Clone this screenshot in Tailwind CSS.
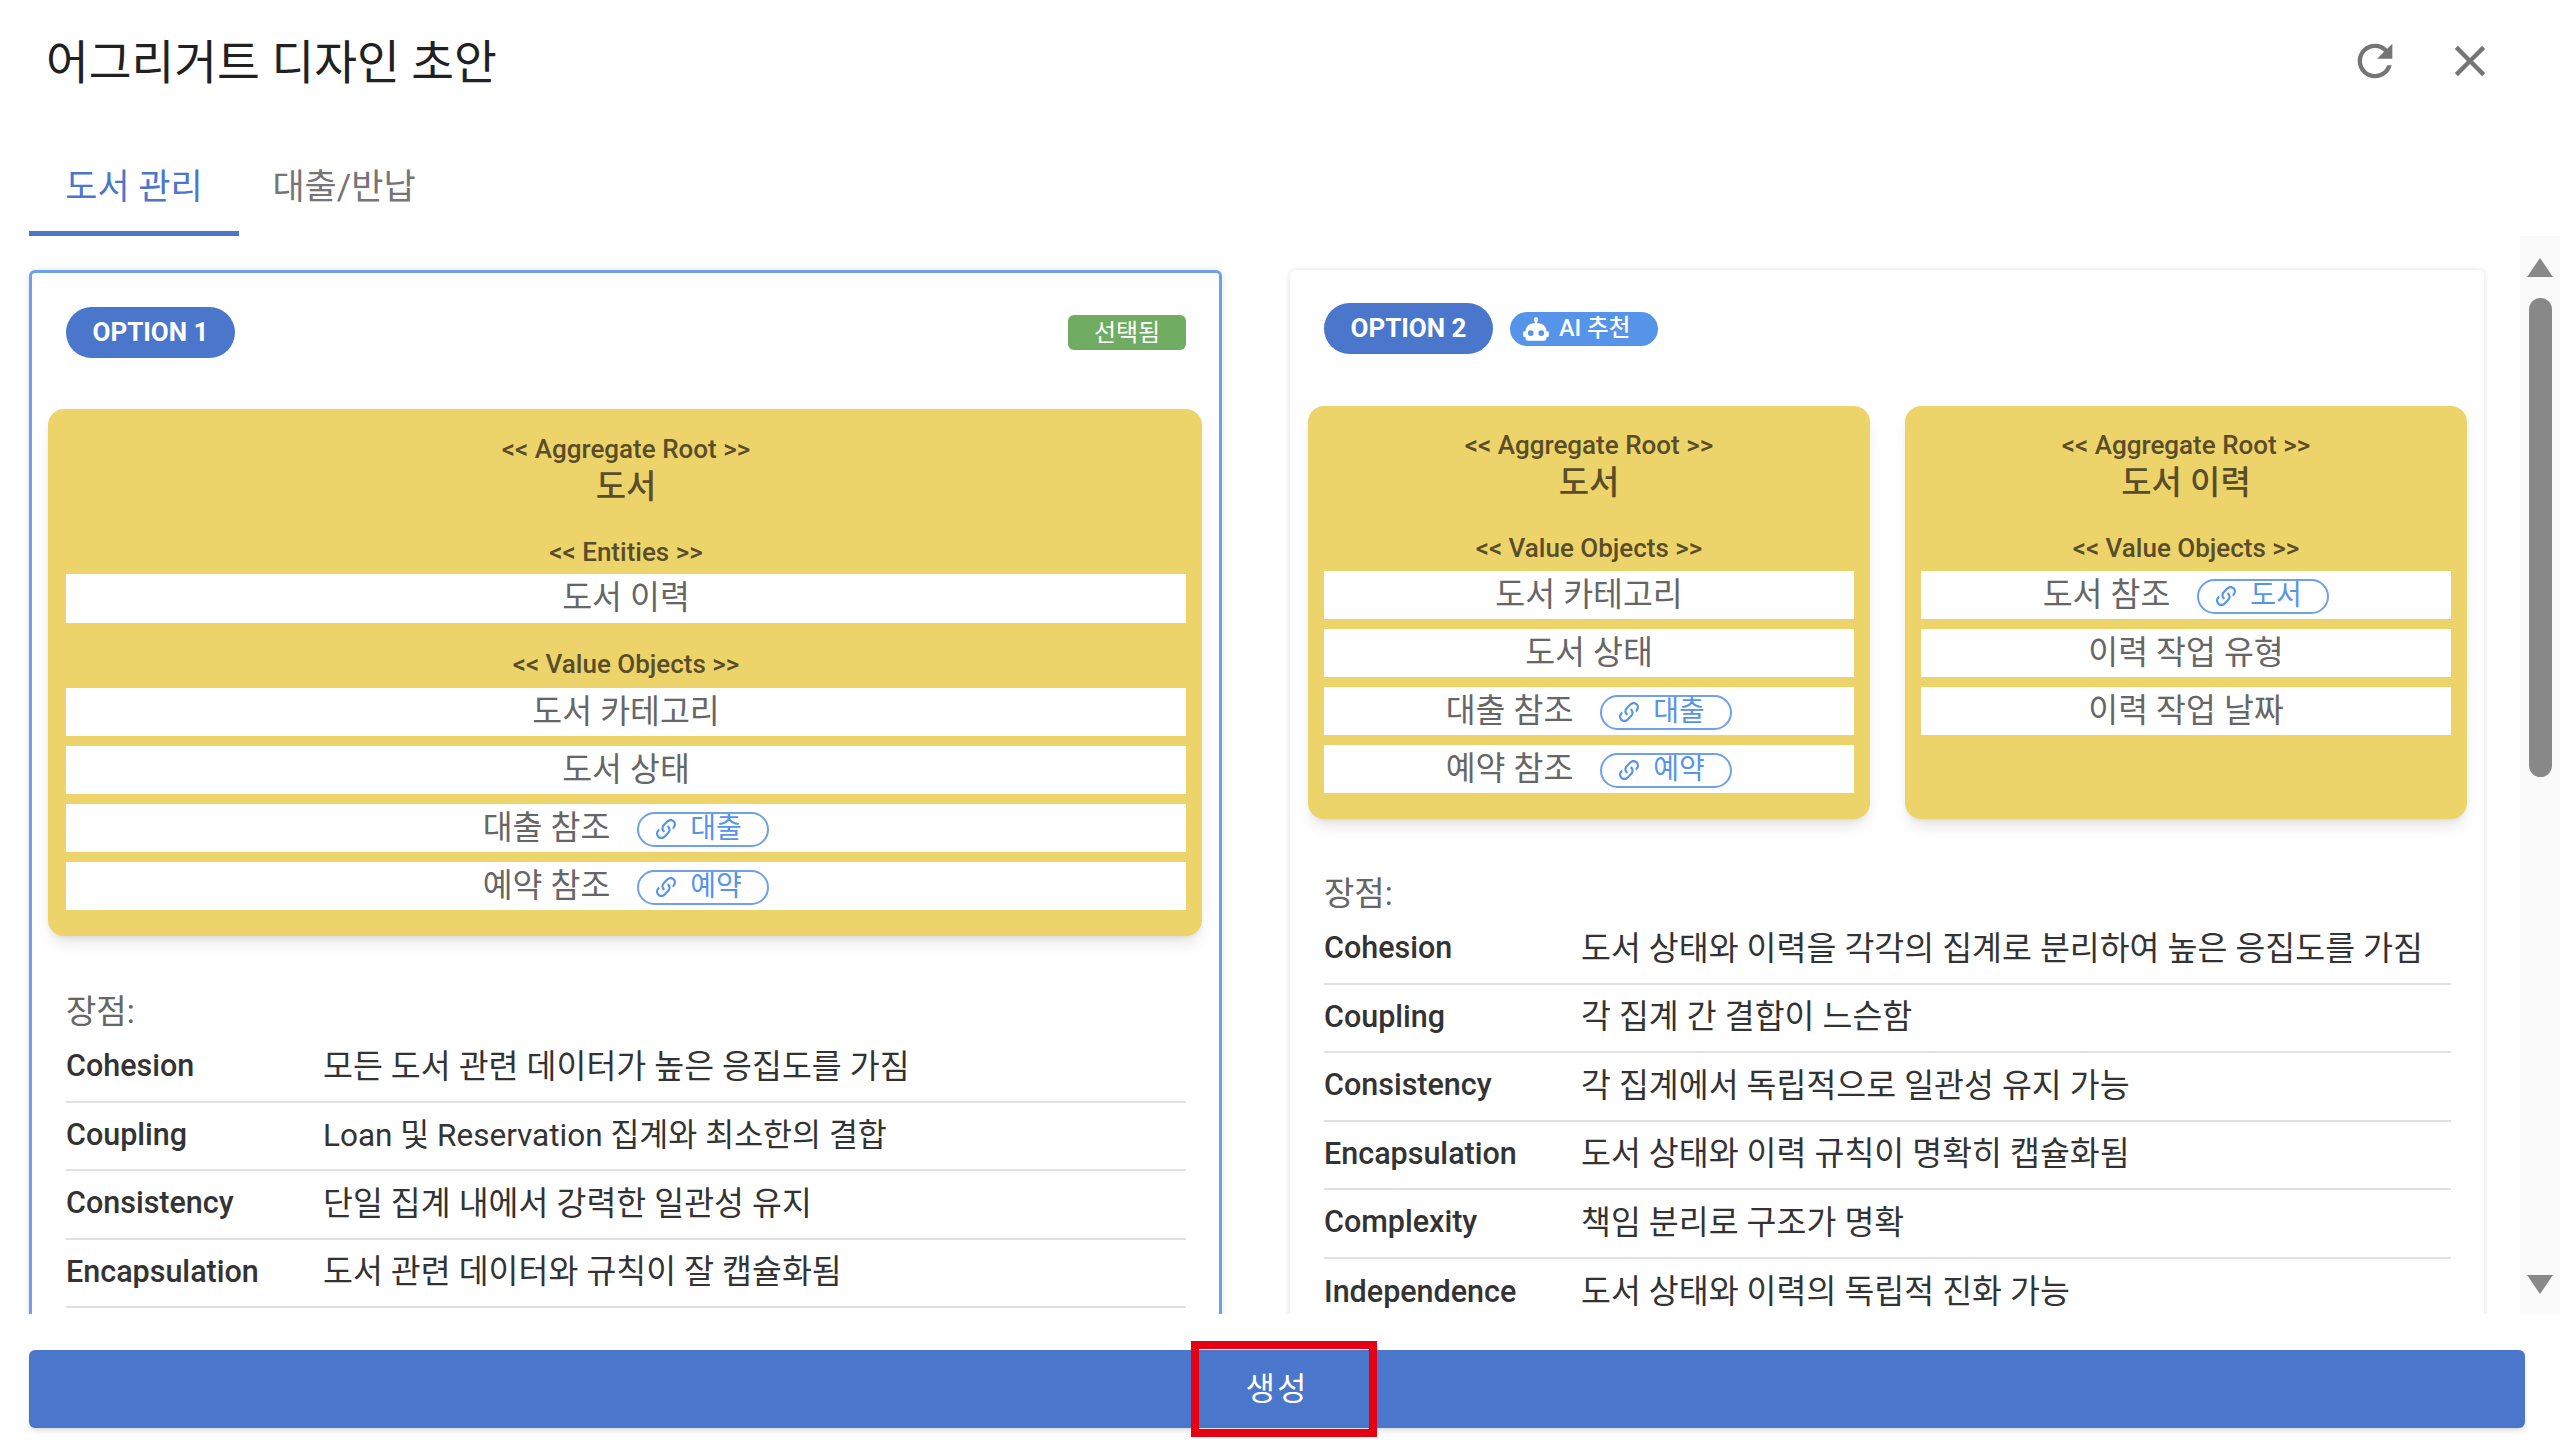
<!DOCTYPE html>
<html lang="ko">
<head>
  <meta charset="UTF-8">
  <meta name="viewport" content="width=device-width, initial-scale=1.0">
  <title>어그리거트 디자인 초안</title>
  <script src="https://cdn.jsdelivr.net/npm/@tailwindcss/browser@4"></script>
</head>
<body class="bg-white font-['Roboto','Noto_Sans_CJK_KR',sans-serif]">
  <main class="relative h-[1452px] w-[2560px] overflow-hidden flex flex-col">

    <!-- title -->
    <header class="h-[122px] shrink-0 pl-[46px] pr-[64px] flex items-start justify-between">
      <h1 class="mt-[33px] text-[46.5px] leading-[60px] text-[#212121]">어그리거트 디자인 초안</h1>
      <div class="mt-[35px] flex gap-[43px] text-[#757575]">
        <svg class="w-[52px] h-[52px]" viewBox="0 0 24 24" fill="currentColor"><path d="M17.65,6.35C16.2,4.9 14.21,4 12,4A8,8 0 0,0 4,12A8,8 0 0,0 12,20C15.73,20 18.84,17.45 19.73,14H17.65C16.83,16.33 14.61,18 12,18A6,6 0 0,1 6,12A6,6 0 0,1 12,6C13.66,6 15.14,6.69 16.22,7.78L13,11H20V4L17.65,6.35Z"/></svg>
        <svg class="w-[52px] h-[52px]" viewBox="0 0 24 24" fill="currentColor"><path d="M19,6.41L17.59,5L12,10.59L6.41,5L5,6.41L10.59,12L5,17.59L6.41,19L12,13.41L17.59,19L19,17.59L13.41,12L19,6.41Z"/></svg>
      </div>
    </header>

    <!-- tabs -->
    <nav class="h-[114px] shrink-0 pl-[29px] flex text-[35px]">
      <div class="w-[210px] h-full pt-[23px] border-b-[5px] border-[#4a76cb] text-[#4a76cb] flex items-center justify-center">도서 관리</div>
      <div class="w-[210px] h-full pt-[23px] pb-[5px] text-[#757575] flex items-center justify-center">대출/반납</div>
    </nav>

    <div class="h-[1078px] shrink-0 flex">
      <div class="w-[2520px] h-full overflow-hidden pl-[29px] pt-[34px] flex gap-[68px] items-start">

        <!-- option 1 -->
        <section class="w-[1193px] shrink-0 rounded-[6px] border-[3px] border-[#6ea0ec] bg-white pl-[16px] pr-[17px] pt-[34px] shadow-[0_0_6px_rgba(0,0,0,0.12)]">
          <div class="h-[51px] pl-[18px] pr-[16px] flex items-center justify-between">
            <span class="w-[169px] h-[51px] rounded-full bg-[#4a76cb] text-white font-bold text-[26px] flex items-center justify-center">OPTION 1</span>
            <span class="w-[118px] h-[35px] rounded-[6px] bg-[#70ad62] text-white text-[24px] flex items-center justify-center">선택됨</span>
          </div>
          <div class="mt-[51px] rounded-[16px] bg-[#ecd46b] pl-[18px] pr-[16px] pt-[25px] pb-[26px] shadow-lg">
            <div class="text-center font-medium text-[26px] leading-[30px] text-[#5a4d2a]">&lt;&lt; Aggregate Root &gt;&gt;</div>
            <div class="mt-[3px] text-center font-medium text-[33px] leading-[40px] text-[#5a4d2a]">도서</div>
            <div class="mt-[30px] text-center font-medium text-[26px] leading-[30px] text-[#5a4d2a]">&lt;&lt; Entities &gt;&gt;</div>
            <div class="mt-[7px] h-[49px] bg-white text-[32.5px] text-[#666666] flex items-center justify-center">도서 이력</div>
            <div class="mt-[26px] text-center font-medium text-[26px] leading-[30px] text-[#5a4d2a]">&lt;&lt; Value Objects &gt;&gt;</div>
            <div class="mt-[9px] flex flex-col gap-[10px] text-[32.5px] text-[#666666]">
              <div class="h-[48px] bg-white flex items-center justify-center">도서 카테고리</div>
              <div class="h-[48px] bg-white flex items-center justify-center">도서 상태</div>
              <div class="h-[48px] bg-white flex items-center justify-center gap-[27px]">대출 참조
                <span class="w-[132px] h-[35px] mt-[2px] rounded-full border-2 border-[#6ea0ec] text-[#5594e8] text-[28px] pl-[14px] flex items-center gap-[11px]">
                  <svg class="w-[26px] h-[26px]" viewBox="0 0 24 24" fill="currentColor"><path d="M10.59,13.41C11,13.8 11,14.44 10.59,14.83C10.2,15.22 9.56,15.22 9.17,14.83C7.22,12.88 7.22,9.71 9.17,7.76V7.76L12.71,4.22C14.66,2.27 17.83,2.27 19.78,4.22C21.73,6.17 21.73,9.34 19.78,11.29L18.29,12.78C18.3,11.96 18.17,11.14 17.89,10.36L18.36,9.88C19.54,8.71 19.54,6.81 18.36,5.64C17.19,4.46 15.29,4.46 14.12,5.64L10.59,9.17C9.41,10.34 9.41,12.24 10.59,13.41M13.41,9.17C13.8,8.78 14.44,8.78 14.83,9.17C16.78,11.12 16.78,14.29 14.83,16.24V16.24L11.29,19.78C9.34,21.73 6.17,21.73 4.22,19.78C2.27,17.83 2.27,14.66 4.22,12.71L5.71,11.22C5.7,12.04 5.83,12.86 6.11,13.65L5.64,14.12C4.46,15.29 4.46,17.19 5.64,18.36C6.81,19.54 8.71,19.54 9.88,18.36L13.41,14.83C14.59,13.66 14.59,11.76 13.41,10.59C13,10.2 13,9.56 13.41,9.17Z"/></svg>대출</span>
              </div>
              <div class="h-[48px] bg-white flex items-center justify-center gap-[27px]">예약 참조
                <span class="w-[132px] h-[35px] mt-[2px] rounded-full border-2 border-[#6ea0ec] text-[#5594e8] text-[28px] pl-[14px] flex items-center gap-[11px]">
                  <svg class="w-[26px] h-[26px]" viewBox="0 0 24 24" fill="currentColor"><path d="M10.59,13.41C11,13.8 11,14.44 10.59,14.83C10.2,15.22 9.56,15.22 9.17,14.83C7.22,12.88 7.22,9.71 9.17,7.76V7.76L12.71,4.22C14.66,2.27 17.83,2.27 19.78,4.22C21.73,6.17 21.73,9.34 19.78,11.29L18.29,12.78C18.3,11.96 18.17,11.14 17.89,10.36L18.36,9.88C19.54,8.71 19.54,6.81 18.36,5.64C17.19,4.46 15.29,4.46 14.12,5.64L10.59,9.17C9.41,10.34 9.41,12.24 10.59,13.41M13.41,9.17C13.8,8.78 14.44,8.78 14.83,9.17C16.78,11.12 16.78,14.29 14.83,16.24V16.24L11.29,19.78C9.34,21.73 6.17,21.73 4.22,19.78C2.27,17.83 2.27,14.66 4.22,12.71L5.71,11.22C5.7,12.04 5.83,12.86 6.11,13.65L5.64,14.12C4.46,15.29 4.46,17.19 5.64,18.36C6.81,19.54 8.71,19.54 9.88,18.36L13.41,14.83C14.59,13.66 14.59,11.76 13.41,10.59C13,10.2 13,9.56 13.41,9.17Z"/></svg>예약</span>
              </div>
            </div>
          </div>
          <div class="mx-[18px] mt-[56px] mb-[2px] text-[33px] leading-[40px] text-[#666666]">장점:</div>
          <div class="ml-[18px] mr-[16px] text-[#333333]">
            <div class="h-[68.5px] border-b-2 border-[#e0e0e0] flex items-center"><span class="w-[257px] -mt-[2px] font-medium text-[30.5px]">Cohesion</span><span class="text-[32.5px]">모든 도서 관련 데이터가 높은 응집도를 가짐</span></div>
            <div class="h-[68.5px] border-b-2 border-[#e0e0e0] flex items-center"><span class="w-[257px] -mt-[2px] font-medium text-[30.5px]">Coupling</span><span class="text-[31.5px]">Loan 및 Reservation 집계와 최소한의 결합</span></div>
            <div class="h-[68.5px] border-b-2 border-[#e0e0e0] flex items-center"><span class="w-[257px] -mt-[2px] font-medium text-[30.5px]">Consistency</span><span class="text-[32.5px]">단일 집계 내에서 강력한 일관성 유지</span></div>
            <div class="h-[68.5px] border-b-2 border-[#e0e0e0] flex items-center"><span class="w-[257px] -mt-[2px] font-medium text-[30.5px]">Encapsulation</span><span class="text-[32.5px]">도서 관련 데이터와 규칙이 잘 캡슐화됨</span></div>
            <div class="h-[68.5px]"></div>
          </div>
        </section>

        <!-- option 2 -->
        <section class="w-[1194px] shrink-0 rounded-[6px] bg-white pl-[18px] pr-[17px] pt-[33px] shadow-[0_0_6px_rgba(0,0,0,0.12)]">
          <div class="h-[51px] pl-[16px] flex items-center gap-[17px]">
            <span class="w-[169px] h-[51px] rounded-full bg-[#4a76cb] text-white font-bold text-[26px] flex items-center justify-center">OPTION 2</span>
            <span class="w-[148px] h-[34px] rounded-full bg-[#5594e8] text-white font-medium text-[23.5px] pl-[12px] flex items-center gap-[9px]">
              <svg class="w-[28px] h-[28px]" viewBox="0 0 24 24" fill="currentColor"><path d="M12,2A2,2 0 0,1 14,4C14,4.74 13.6,5.39 13,5.73V7H14A7,7 0 0,1 21,14H22A1,1 0 0,1 23,15V18A1,1 0 0,1 22,19H21V20A2,2 0 0,1 19,22H5A2,2 0 0,1 3,20V19H2A1,1 0 0,1 1,18V15A1,1 0 0,1 2,14H3A7,7 0 0,1 10,7H11V5.73C10.4,5.39 10,4.74 10,4A2,2 0 0,1 12,2M7.5,13A2.5,2.5 0 0,0 5,15.5A2.5,2.5 0 0,0 7.5,18A2.5,2.5 0 0,0 10,15.5A2.5,2.5 0 0,0 7.5,13M16.5,13A2.5,2.5 0 0,0 14,15.5A2.5,2.5 0 0,0 16.5,18A2.5,2.5 0 0,0 19,15.5A2.5,2.5 0 0,0 16.5,13Z"/></svg>AI 추천</span>
          </div>
          <div class="mt-[52px] grid grid-cols-[562px_562px] gap-[35px]">
            <div class="rounded-[16px] bg-[#ecd46b] px-[16px] pt-[24px] pb-[26px] shadow-lg">
              <div class="text-center font-medium text-[26px] leading-[30px] text-[#5a4d2a]">&lt;&lt; Aggregate Root &gt;&gt;</div>
              <div class="mt-[3px] text-center font-medium text-[33px] leading-[40px] text-[#5a4d2a]">도서</div>
              <div class="mt-[30px] text-center font-medium text-[26px] leading-[30px] text-[#5a4d2a]">&lt;&lt; Value Objects &gt;&gt;</div>
              <div class="mt-[8px] flex flex-col gap-[10px] text-[32.5px] text-[#666666]">
                <div class="h-[48px] bg-white flex items-center justify-center">도서 카테고리</div>
                <div class="h-[48px] bg-white flex items-center justify-center">도서 상태</div>
                <div class="h-[48px] bg-white flex items-center justify-center gap-[27px]">대출 참조
                  <span class="w-[132px] h-[35px] mt-[2px] rounded-full border-2 border-[#6ea0ec] text-[#5594e8] text-[28px] pl-[14px] flex items-center gap-[11px]">
                    <svg class="w-[26px] h-[26px]" viewBox="0 0 24 24" fill="currentColor"><path d="M10.59,13.41C11,13.8 11,14.44 10.59,14.83C10.2,15.22 9.56,15.22 9.17,14.83C7.22,12.88 7.22,9.71 9.17,7.76V7.76L12.71,4.22C14.66,2.27 17.83,2.27 19.78,4.22C21.73,6.17 21.73,9.34 19.78,11.29L18.29,12.78C18.3,11.96 18.17,11.14 17.89,10.36L18.36,9.88C19.54,8.71 19.54,6.81 18.36,5.64C17.19,4.46 15.29,4.46 14.12,5.64L10.59,9.17C9.41,10.34 9.41,12.24 10.59,13.41M13.41,9.17C13.8,8.78 14.44,8.78 14.83,9.17C16.78,11.12 16.78,14.29 14.83,16.24V16.24L11.29,19.78C9.34,21.73 6.17,21.73 4.22,19.78C2.27,17.83 2.27,14.66 4.22,12.71L5.71,11.22C5.7,12.04 5.83,12.86 6.11,13.65L5.64,14.12C4.46,15.29 4.46,17.19 5.64,18.36C6.81,19.54 8.71,19.54 9.88,18.36L13.41,14.83C14.59,13.66 14.59,11.76 13.41,10.59C13,10.2 13,9.56 13.41,9.17Z"/></svg>대출</span>
                </div>
                <div class="h-[48px] bg-white flex items-center justify-center gap-[27px]">예약 참조
                  <span class="w-[132px] h-[35px] mt-[2px] rounded-full border-2 border-[#6ea0ec] text-[#5594e8] text-[28px] pl-[14px] flex items-center gap-[11px]">
                    <svg class="w-[26px] h-[26px]" viewBox="0 0 24 24" fill="currentColor"><path d="M10.59,13.41C11,13.8 11,14.44 10.59,14.83C10.2,15.22 9.56,15.22 9.17,14.83C7.22,12.88 7.22,9.71 9.17,7.76V7.76L12.71,4.22C14.66,2.27 17.83,2.27 19.78,4.22C21.73,6.17 21.73,9.34 19.78,11.29L18.29,12.78C18.3,11.96 18.17,11.14 17.89,10.36L18.36,9.88C19.54,8.71 19.54,6.81 18.36,5.64C17.19,4.46 15.29,4.46 14.12,5.64L10.59,9.17C9.41,10.34 9.41,12.24 10.59,13.41M13.41,9.17C13.8,8.78 14.44,8.78 14.83,9.17C16.78,11.12 16.78,14.29 14.83,16.24V16.24L11.29,19.78C9.34,21.73 6.17,21.73 4.22,19.78C2.27,17.83 2.27,14.66 4.22,12.71L5.71,11.22C5.7,12.04 5.83,12.86 6.11,13.65L5.64,14.12C4.46,15.29 4.46,17.19 5.64,18.36C6.81,19.54 8.71,19.54 9.88,18.36L13.41,14.83C14.59,13.66 14.59,11.76 13.41,10.59C13,10.2 13,9.56 13.41,9.17Z"/></svg>예약</span>
                </div>
              </div>
            </div>
            <div class="rounded-[16px] bg-[#ecd46b] px-[16px] pt-[24px] pb-[26px] shadow-lg">
              <div class="text-center font-medium text-[26px] leading-[30px] text-[#5a4d2a]">&lt;&lt; Aggregate Root &gt;&gt;</div>
              <div class="mt-[3px] text-center font-medium text-[33px] leading-[40px] text-[#5a4d2a]">도서 이력</div>
              <div class="mt-[30px] text-center font-medium text-[26px] leading-[30px] text-[#5a4d2a]">&lt;&lt; Value Objects &gt;&gt;</div>
              <div class="mt-[8px] flex flex-col gap-[10px] text-[32.5px] text-[#666666]">
                <div class="h-[48px] bg-white flex items-center justify-center gap-[27px]">도서 참조
                  <span class="w-[132px] h-[35px] mt-[2px] rounded-full border-2 border-[#6ea0ec] text-[#5594e8] text-[28px] pl-[14px] flex items-center gap-[11px]">
                    <svg class="w-[26px] h-[26px]" viewBox="0 0 24 24" fill="currentColor"><path d="M10.59,13.41C11,13.8 11,14.44 10.59,14.83C10.2,15.22 9.56,15.22 9.17,14.83C7.22,12.88 7.22,9.71 9.17,7.76V7.76L12.71,4.22C14.66,2.27 17.83,2.27 19.78,4.22C21.73,6.17 21.73,9.34 19.78,11.29L18.29,12.78C18.3,11.96 18.17,11.14 17.89,10.36L18.36,9.88C19.54,8.71 19.54,6.81 18.36,5.64C17.19,4.46 15.29,4.46 14.12,5.64L10.59,9.17C9.41,10.34 9.41,12.24 10.59,13.41M13.41,9.17C13.8,8.78 14.44,8.78 14.83,9.17C16.78,11.12 16.78,14.29 14.83,16.24V16.24L11.29,19.78C9.34,21.73 6.17,21.73 4.22,19.78C2.27,17.83 2.27,14.66 4.22,12.71L5.71,11.22C5.7,12.04 5.83,12.86 6.11,13.65L5.64,14.12C4.46,15.29 4.46,17.19 5.64,18.36C6.81,19.54 8.71,19.54 9.88,18.36L13.41,14.83C14.59,13.66 14.59,11.76 13.41,10.59C13,10.2 13,9.56 13.41,9.17Z"/></svg>도서</span>
                </div>
                <div class="h-[48px] bg-white flex items-center justify-center">이력 작업 유형</div>
                <div class="h-[48px] bg-white flex items-center justify-center">이력 작업 날짜</div>
              </div>
            </div>
          </div>
          <div class="mx-[16px] mt-[55px] mb-[2px] text-[33px] leading-[40px] text-[#666666]">장점:</div>
          <div class="mx-[16px] text-[#333333]">
            <div class="h-[68.5px] border-b-2 border-[#e0e0e0] flex items-center"><span class="w-[257px] -mt-[2px] font-medium text-[30.5px]">Cohesion</span><span class="text-[32.5px]">도서 상태와 이력을 각각의 집계로 분리하여 높은 응집도를 가짐</span></div>
            <div class="h-[68.5px] border-b-2 border-[#e0e0e0] flex items-center"><span class="w-[257px] -mt-[2px] font-medium text-[30.5px]">Coupling</span><span class="text-[32.5px]">각 집계 간 결합이 느슨함</span></div>
            <div class="h-[68.5px] border-b-2 border-[#e0e0e0] flex items-center"><span class="w-[257px] -mt-[2px] font-medium text-[30.5px]">Consistency</span><span class="text-[32.5px]">각 집계에서 독립적으로 일관성 유지 가능</span></div>
            <div class="h-[68.5px] border-b-2 border-[#e0e0e0] flex items-center"><span class="w-[257px] -mt-[2px] font-medium text-[30.5px]">Encapsulation</span><span class="text-[32.5px]">도서 상태와 이력 규칙이 명확히 캡슐화됨</span></div>
            <div class="h-[68.5px] border-b-2 border-[#e0e0e0] flex items-center"><span class="w-[257px] -mt-[2px] font-medium text-[30.5px]">Complexity</span><span class="text-[32.5px]">책임 분리로 구조가 명확</span></div>
            <div class="h-[68.5px] flex items-center"><span class="w-[257px] -mt-[2px] font-medium text-[30.5px]">Independence</span><span class="text-[32.5px]">도서 상태와 이력의 독립적 진화 가능</span></div>
          </div>
        </section>
      </div>

      <!-- scrollbar -->
      <div class="w-[40px] h-full bg-[#fafafa] flex flex-col items-center pt-[22px]">
        <div class="w-0 h-0 border-x-[13px] border-x-transparent border-b-[19px] border-b-[#888888]"></div>
        <div class="mt-[21px] w-[23px] h-[479px] rounded-full bg-[#888888]"></div>
        <div class="mt-[498px] w-0 h-0 border-x-[13px] border-x-transparent border-t-[19px] border-t-[#888888]"></div>
      </div>
    </div>

    <!-- footer -->
    <div class="pl-[29px] pt-[36px]">
      <button class="w-[2496px] h-[78px] rounded-[6px] bg-[#4a76cb] text-white text-[32px] tracking-[2px] shadow-md">생성</button>
    </div>

    <!-- red highlight -->
    <div class="absolute left-[1191px] top-[1341px] w-[186px] h-[96px] border-[8px] border-[#e60012]"></div>
  </main>
</body>
</html>
